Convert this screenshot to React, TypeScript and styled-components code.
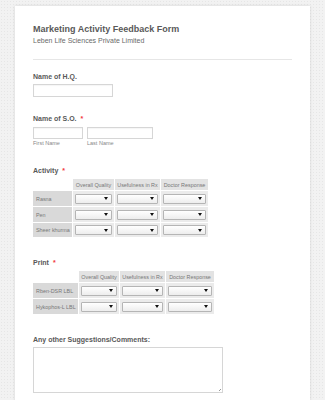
import React from 'react'
import styled, { createGlobalStyle } from 'styled-components'

const GlobalStyle = createGlobalStyle`
  html, body {
    margin: 0;
    padding: 0;
    overflow: hidden;
  }
  body {
    background-color: #f2f2f2;
    background-image: radial-gradient(#e6e6e6 0.7px, transparent 0.8px);
    background-size: 3px 3px;
    font-family: 'Liberation Sans', Arial, sans-serif;
  }
`;

const Card = styled.div`
  width: 295px;
  margin: 6px 0 0 15px;
  padding: 18px 18px 30px 18px;
  box-sizing: border-box;
  background-color: #fff;
  box-shadow: 0 0 3px rgba(0, 0, 0, 0.12);
`;

const Title = styled.h1`
  margin: 0;
  font-size: 9px;
  line-height: 11px;
  font-weight: bold;
  color: #595959;
`;

const SubTitle = styled.div`
  margin-top: 1px;
  font-size: 7px;
  line-height: 9px;
  color: #6a6a6a;
`;

const Divider = styled.div`
  margin-top: 14px;
  height: 1px;
  background-color: #e6e6e6;
`;

const Field = styled.div<{ $top: number }>`
  margin-top: ${p => p.$top}px;
`;

const Label = styled.div`
  font-size: 7px;
  line-height: 9px;
  font-weight: bold;
  color: #595959;
`;

const Required = styled.span`
  color: #f23a3c;
  margin-left: 4px;
`;

const InputRow = styled.div<{ $gap: number }>`
  display: flex;
  gap: 4px;
  margin-top: ${p => p.$gap}px;
`;

const SubField = styled.div`
  display: flex;
  flex-direction: column;
`;

const TextBox = styled.div<{ $w: number; $h: number }>`
  width: ${p => p.$w}px;
  height: ${p => p.$h}px;
  box-sizing: border-box;
  border: 1px solid #d6d6d6;
  background: #fff;
  box-shadow: inset 0 1px 1px rgba(0, 0, 0, 0.04);
`;

const SubLabel = styled.div`
  margin-top: 1px;
  font-size: 5.5px;
  line-height: 7px;
  color: #888;
`;

const Matrix = styled.div<{ $cols: string; $rows: string }>`
  display: grid;
  grid-template-columns: ${p => p.$cols};
  grid-template-rows: ${p => p.$rows};
  gap: 1px;
  margin-top: 4px;
  width: max-content;
  background: #fff;
`;

const Corner = styled.div`
  background: #fff;
`;

const HeadCell = styled.div`
  background: #e3e3e3;
  color: #777;
  font-size: 5.4px;
  display: flex;
  align-items: center;
  justify-content: center;
  white-space: nowrap;
  overflow: hidden;
`;

const RowLabel = styled.div`
  background-color: #d9d9d9;
  background-image: radial-gradient(#d1d1d1 0.6px, transparent 0.7px);
  background-size: 2px 2px;
  color: #777;
  font-size: 5.4px;
  display: flex;
  align-items: center;
  padding-left: 3px;
  white-space: nowrap;
`;

const DataCell = styled.div`
  background: #ebebeb;
  display: flex;
  align-items: center;
  padding: 0 2px;
`;

const Select = styled.div`
  position: relative;
  width: 100%;
  height: 10px;
  box-sizing: border-box;
  border: 1px solid #b5b5b5;
  border-radius: 1px;
  background: linear-gradient(#ffffff, #ededed);

  &::after {
    content: '';
    position: absolute;
    right: 3px;
    top: 2.5px;
    border-left: 2px solid transparent;
    border-right: 2px solid transparent;
    border-top: 3px solid #111;
  }
`;

const TextArea = styled.textarea`
  display: block;
  margin-top: 3px;
  width: 190px;
  height: 46px;
  box-sizing: border-box;
  border: 1px solid #d6d6d6;
  padding: 0;
  outline: none;
  resize: none;
  background-color: #fff;
  background-image: linear-gradient(
    135deg,
    transparent 0 55%,
    #999 55% 62%,
    transparent 62% 75%,
    #999 75% 85%,
    transparent 85%
  );
  background-size: 4px 4px;
  background-position: right 1px bottom 1px;
  background-repeat: no-repeat;
`;

const headers = ['Overall Quality', 'Usefulness in Rx', 'Doctor Response'];

type MatrixProps = { cols: string; rows: string; items: string[] };

const MatrixTable = ({ cols, rows, items }: MatrixProps) => (
  <Matrix $cols={cols} $rows={rows}>
    <Corner />
    {headers.map(h => (
      <HeadCell key={h}>{h}</HeadCell>
    ))}
    {items.map(item => (
      <React.Fragment key={item}>
        <RowLabel>{item}</RowLabel>
        {headers.map(h => (
          <DataCell key={h}>
            <Select />
          </DataCell>
        ))}
      </React.Fragment>
    ))}
  </Matrix>
);

const App = () => {
  return (
    <>
      <GlobalStyle />
      <Card>
        <Title>Marketing Activity Feedback Form</Title>
        <SubTitle>Leben Life Sciences Private Limited</SubTitle>
        <Divider />

        <Field $top={12}>
          <Label>Name of H.Q.</Label>
          <InputRow $gap={3}>
            <TextBox $w={80} $h={13} />
          </InputRow>
        </Field>

        <Field $top={17}>
          <Label>
            Name of S.O.<Required>*</Required>
          </Label>
          <InputRow $gap={4}>
            <SubField>
              <TextBox $w={50} $h={12} />
              <SubLabel>First Name</SubLabel>
            </SubField>
            <SubField>
              <TextBox $w={66} $h={12} />
              <SubLabel>Last Name</SubLabel>
            </SubField>
          </InputRow>
        </Field>

        <Field $top={19}>
          <Label>
            Activity<Required>*</Required>
          </Label>
          <MatrixTable
            cols="39px 41px 45px 47px"
            rows="11px 15px 15px 14px"
            items={['Rasna', 'Pen', 'Sheer khurma']}
          />
        </Field>

        <Field $top={21}>
          <Label>
            Print<Required>*</Required>
          </Label>
          <MatrixTable
            cols="45px 40px 45px 48px"
            rows="11px 15px 15px"
            items={['Rben-DSR LBL', 'Hykophos-L LBL']}
          />
        </Field>

        <Field $top={21}>
          <Label>Any other Suggestions/Comments:</Label>
          <TextArea />
        </Field>
      </Card>
    </>
  )
}

export default App
